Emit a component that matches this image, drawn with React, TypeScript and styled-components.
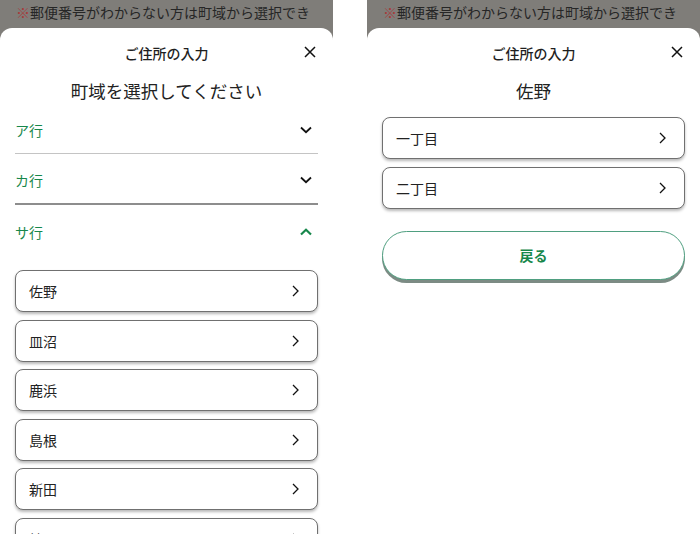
import React from 'react';
import styled, { createGlobalStyle } from 'styled-components';

const GREEN = '#17874b';

const GlobalStyle = createGlobalStyle`
	html, body {
		margin: 0;
		padding: 0;
		background: #ffffff;
		font-family: 'Noto Sans CJK JP', 'Noto Sans', sans-serif;
		color: #222222;
		overflow: hidden;
	}
`;

const Screens = styled.main`
	display: flex;
	justify-content: space-between;
	width: 700px;
	height: 534px;
`;

const Phone = styled.section`
	display: flex;
	flex-direction: column;
	width: 333px;
	height: 534px;
	overflow: hidden;
	background: #7f7d79;
`;

const Notice = styled.p`
	flex: none;
	height: 28px;
	margin: 0;
	padding: 0 16px;
	overflow: hidden;
	white-space: nowrap;
	font-size: 14px;
	line-height: 25px;
	color: #262626;

	span {
		color: #a83a3a;
	}
`;

const Sheet = styled.div`
	flex: 1;
	display: flex;
	flex-direction: column;
	padding: 0 15px;
	background: #ffffff;
	border-radius: 12px 12px 0 0;
`;

const SheetHeader = styled.header`
	position: relative;
	display: flex;
	justify-content: center;
	align-items: center;
	height: 50px;
	flex: none;
`;

const SheetTitle = styled.h1`
	margin: 0 0 1px;
	font-size: 14px;
	font-weight: 500;
	color: #1f1f1f;
`;

const CloseButton = styled.button`
	position: absolute;
	right: 1px;
	top: 17px;
	width: 14px;
	height: 14px;
	padding: 0;
	border: none;
	background: none;
	display: flex;
	align-items: center;
	justify-content: center;
`;

const Heading = styled.h2`
	margin: 0;
	height: 25px;
	flex: none;
	text-align: center;
	font-size: 17.5px;
	line-height: 25px;
	font-weight: 400;
	color: #222222;
`;

const GroupRow = styled.div<{ $divider?: 'light' | 'dark' }>`
	display: flex;
	align-items: center;
	justify-content: space-between;
	height: 51px;
	padding: 3px 6px 0 0;
	box-sizing: border-box;
	border-bottom: ${(p) =>
		p.$divider === 'dark'
			? '2px solid #8d8d8d'
			: p.$divider === 'light'
			? '1.5px solid #c4c4c4'
			: 'none'};
	font-size: 14px;
	color: ${GREEN};
`;

const CardList = styled.ul`
	display: flex;
	flex-direction: column;
	gap: 7.6px;
	margin: 14px 0 0;
	padding: 0;
	list-style: none;
`;

const Card = styled.li`
	flex: none;
	display: flex;
	align-items: center;
	justify-content: space-between;
	height: 42px;
	box-sizing: border-box;
	padding: 0 18px 0 13px;
	border: 1px solid #707070;
	border-radius: 8px;
	background: #ffffff;
	box-shadow: 0 2px 3px rgba(0, 0, 0, 0.28);
	font-size: 14px;
	color: #222222;
`;

const BackButton = styled.button`
	margin-top: 22px;
	height: 49px;
	border: 1px solid #4f9f80;
	border-radius: 25px;
	background: #ffffff;
	box-shadow: 0 3px 0 #7c8b84;
	font-family: inherit;
	font-size: 14px;
	font-weight: 700;
	color: ${GREEN};
`;

const CloseIcon = () => (
	<svg width="12" height="12" viewBox="0 0 12 12">
		<path d="M1 1L11 11M11 1L1 11" stroke="#111" strokeWidth="1.5" fill="none" />
	</svg>
);

const ChevronDown = () => (
	<svg width="12" height="8" viewBox="0 0 12 8">
		<polyline points="1,1.5 6,6.2 11,1.5" stroke="#111" strokeWidth="1.8" fill="none" />
	</svg>
);

const ChevronUp = () => (
	<svg width="12" height="8" viewBox="0 0 12 8">
		<polyline points="1,6.5 6,1.8 11,6.5" stroke={GREEN} strokeWidth="2.2" fill="none" />
	</svg>
);

const ChevronRight = () => (
	<svg width="7" height="12" viewBox="0 0 7 12">
		<polyline points="1,1 6,6 1,11" stroke="#111" strokeWidth="1.3" fill="none" />
	</svg>
);

// only the part of the notice that shows above the sheet
const NOTICE = '郵便番号がわからない方は町域から選択でき';

const Frame = ({ children }: { children: React.ReactNode }) => (
	<Phone>
		<Notice>
			<span>※</span>
			{NOTICE}
		</Notice>
		<Sheet>
			<SheetHeader>
				<SheetTitle>ご住所の入力</SheetTitle>
				<CloseButton aria-label="閉じる">
					<CloseIcon />
				</CloseButton>
			</SheetHeader>
			{children}
		</Sheet>
	</Phone>
);

const towns = ['佐野', '皿沼', '鹿浜', '島根', '新田', '神明'];
const blocks = ['一丁目', '二丁目'];

export default function App() {
	return (
		<>
			<GlobalStyle />
			<Screens>
				<Frame>
					<Heading>町域を選択してください</Heading>
					<GroupRow $divider="light">
						ア行
						<ChevronDown />
					</GroupRow>
					<GroupRow $divider="dark">
						カ行
						<ChevronDown />
					</GroupRow>
					<GroupRow>
						サ行
						<ChevronUp />
					</GroupRow>
					<CardList>
						{towns.map((t) => (
							<Card key={t}>
								{t}
								<ChevronRight />
							</Card>
						))}
					</CardList>
				</Frame>
				<Frame>
					<Heading>佐野</Heading>
					<CardList>
						{blocks.map((b) => (
							<Card key={b}>
								{b}
								<ChevronRight />
							</Card>
						))}
					</CardList>
					<BackButton>戻る</BackButton>
				</Frame>
			</Screens>
		</>
	);
}
